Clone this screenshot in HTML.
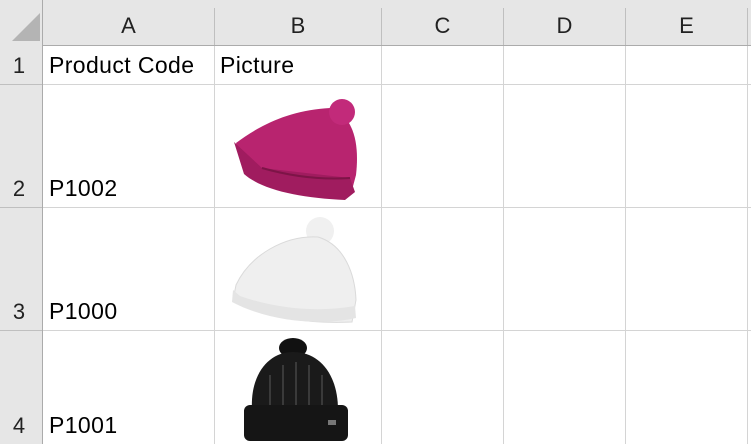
<!DOCTYPE html>
<html><head><style>
body{margin:0;width:751px;height:444px;overflow:hidden;background:#fff;font-family:"Liberation Sans",sans-serif;}
.a{position:absolute;}
.t{position:absolute;font-size:23px;letter-spacing:0.4px;color:#000;}
.h{position:absolute;font-size:22px;color:#222;text-align:center;}
</style></head><body>
<div class="a" style="left:0;top:0;width:751px;height:45px;background:#e6e6e6;border-bottom:1px solid #ababab"></div>
<div class="a" style="left:0;top:0;width:42px;height:444px;background:#e6e6e6;border-right:1px solid #ababab"></div>
<svg class="a" style="left:0;top:0" width="751" height="444">
<polygon points="12,41 40,41 40,13" fill="#b4b4b4"/>
<g stroke="#bfbfbf" stroke-width="1">
<line x1="214.5" y1="8" x2="214.5" y2="45"/><line x1="381.5" y1="8" x2="381.5" y2="45"/><line x1="503.5" y1="8" x2="503.5" y2="45"/><line x1="625.5" y1="8" x2="625.5" y2="45"/><line x1="747.5" y1="8" x2="747.5" y2="45"/>
<line x1="0" y1="84.5" x2="42" y2="84.5"/><line x1="0" y1="207.5" x2="42" y2="207.5"/><line x1="0" y1="330.5" x2="42" y2="330.5"/>
</g>
<g stroke="#d4d4d4" stroke-width="1">
<line x1="214.5" y1="46" x2="214.5" y2="444"/><line x1="381.5" y1="46" x2="381.5" y2="444"/><line x1="503.5" y1="46" x2="503.5" y2="444"/><line x1="625.5" y1="46" x2="625.5" y2="444"/><line x1="747.5" y1="46" x2="747.5" y2="444"/>
<line x1="43" y1="84.5" x2="751" y2="84.5"/><line x1="43" y1="207.5" x2="751" y2="207.5"/><line x1="43" y1="330.5" x2="751" y2="330.5"/>
</g>
<!-- pink hat -->
<g>
<path d="M236,143 C260,125 290,110 330,108 C352,115 360,140 356,175 L352,190 C330,198 290,192 262,183 L244,172 Z" fill="#b8246f"/>
<path d="M234,142 L262,168 L350,178 L355,192 L345,200 C300,198 262,190 244,174 Z" fill="#a01c5f"/>
<circle cx="342" cy="112" r="13" fill="#c22a7a"/>
<path d="M262,168 C290,176 320,180 350,178" stroke="#7d1447" stroke-width="2" fill="none"/>
</g>
<!-- white hat -->
<g>
<circle cx="320" cy="231" r="14" fill="#f0f0f0"/>
<path d="M236,285 C250,255 285,235 318,237 C345,245 355,275 356,300 L352,322 C310,324 265,318 233,300 Z" fill="#efefef" stroke="#dadada"/>
<path d="M233,290 L240,296 C280,310 320,312 355,306 L356,318 C320,326 270,322 232,302 Z" fill="#e4e4e4"/>
</g>
<!-- black hat -->
<g>
<ellipse cx="293" cy="348" rx="14" ry="10" fill="#111"/>
<path d="M252,410 C250,375 268,352 293,352 C320,352 338,375 338,410 Z" fill="#1a1a1a"/>
<g stroke="#3a3a3a" stroke-width="2" fill="none">
<path d="M270,375 L270,408 M283,365 L283,408 M296,362 L296,408 M309,365 L309,408 M322,375 L322,408"/>
</g>
<rect x="244" y="405" width="104" height="36" rx="6" fill="#151515"/>
<rect x="328" y="420" width="8" height="5" fill="#777"/>
</g>
</svg>
<div class="h" style="left:43px;top:13px;width:171px">A</div>
<div class="h" style="left:215px;top:13px;width:166px">B</div>
<div class="h" style="left:382px;top:13px;width:121px">C</div>
<div class="h" style="left:504px;top:13px;width:121px">D</div>
<div class="h" style="left:626px;top:13px;width:121px">E</div>
<div class="h" style="left:0;top:53px;width:38px">1</div>
<div class="h" style="left:0;top:176px;width:38px">2</div>
<div class="h" style="left:0;top:299px;width:38px">3</div>
<div class="h" style="left:0;top:413px;width:38px">4</div>
<div class="t" style="left:49px;top:52px">Product Code</div>
<div class="t" style="left:220px;top:52px">Picture</div>
<div class="t" style="left:49px;top:175px">P1002</div>
<div class="t" style="left:49px;top:298px">P1000</div>
<div class="t" style="left:49px;top:412px">P1001</div>
</body></html>
